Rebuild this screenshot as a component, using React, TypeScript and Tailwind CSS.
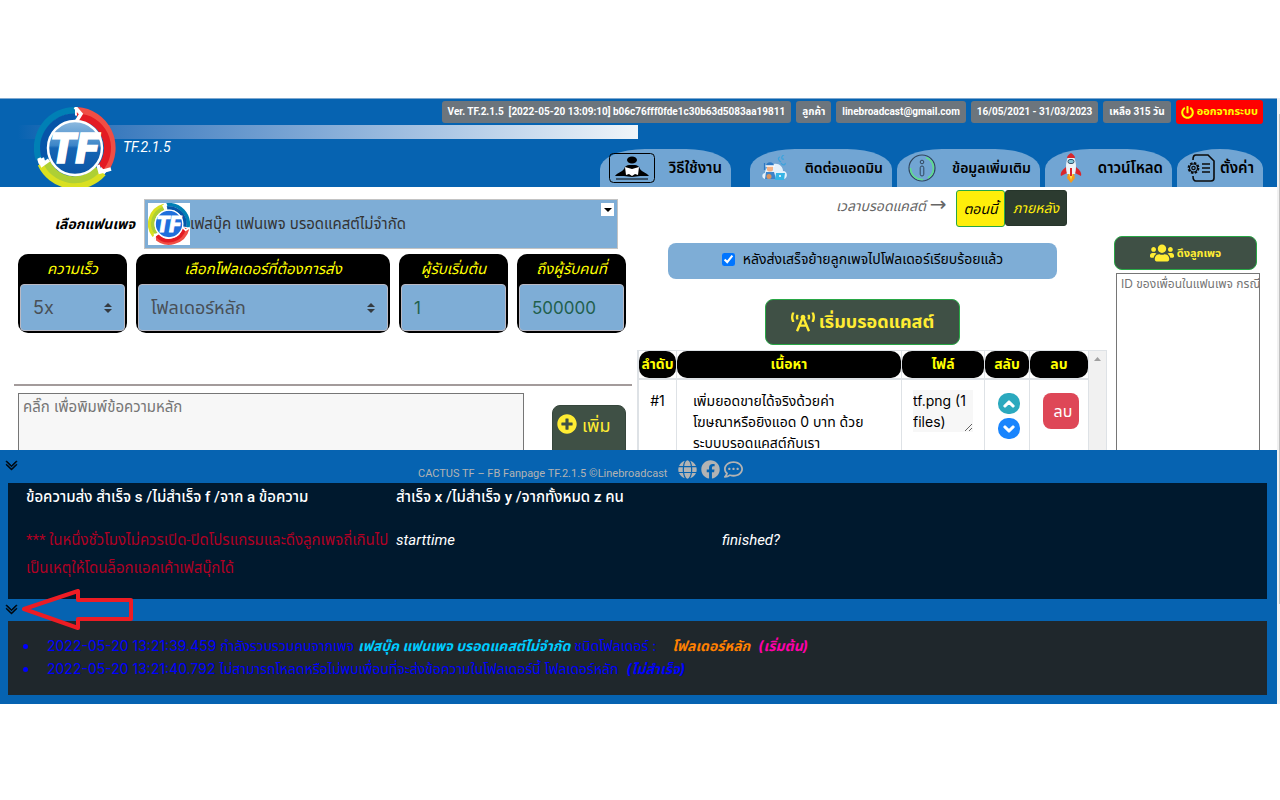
import type { ReactNode } from 'react';
import {
  FaBroadcastTower,
  FaChevronDown,
  FaChevronUp,
  FaFacebook,
  FaGlobe,
  FaPlusCircle,
  FaPowerOff,
  FaRegCommentDots,
  FaUsers,
} from 'react-icons/fa';
import { BsChevronDoubleDown } from 'react-icons/bs';

const accountBadges = [
  'Ver. TF.2.1.5  [2022-05-20 13:09:10] b06c76fff0fde1c30b63d5083aa19811',
  'ลูกค้า',
  'linebroadcast@gmail.com',
  '16/05/2021 - 31/03/2023',
  'เหลือ 315 วัน',
];

function Logo({ className, turned = false }: { className: string; turned?: boolean }) {
  return (
    <svg viewBox="0 0 82 82" className={className} aria-label="TF">
      <defs>
        <linearGradient id="ball" x1="0" y1="0" x2="0" y2="1">
          <stop offset="0" stopColor="#8fbbe0" />
          <stop offset="0.45" stopColor="#3d86c8" />
          <stop offset="0.5" stopColor="#1565b4" />
          <stop offset="1" stopColor="#0b55a5" />
        </linearGradient>
      </defs>
      <g transform={turned ? 'rotate(100 41 41)' : undefined}>
        <circle cx="41" cy="41" r="36" fill="none" stroke="#fff" strokeWidth="7" />
        <path d="M43 3.6A37.500 37.500 0 0 1 71 63" fill="none" stroke="#f04e45" strokeWidth="7" />
        <path d="M43 10A31 31 0 0 1 67 60" fill="none" stroke="#e31b23" strokeWidth="7" />
        <path d="M69 66A37.500 37.500 0 0 1 7 57" fill="none" stroke="#d9e021" strokeWidth="7" />
        <path d="M64 62A31 31 0 0 1 12 54" fill="none" stroke="#aecf35" strokeWidth="7" />
        <path d="M5 52A37.500 37.500 0 0 1 41 3.500" fill="none" stroke="#0080b5" strokeWidth="7" />
        <path d="M11 50A31 31 0 0 1 41 10" fill="none" stroke="#0655a8" strokeWidth="7" />
        <path d="M41 0l6 7-5 8M5 51l3 7 7-5M64 58l2 7 11-3" fill="none" stroke="#fff" strokeWidth="3.500" />
      </g>
      <circle cx="41" cy="41" r="27" fill={turned ? '#1f6fdc' : 'url(#ball)'} stroke="#fff" strokeWidth="2.500" />
      <text
        x="40"
        y="56"
        textAnchor="middle"
        fontSize="42"
        fontWeight="900"
        fontStyle="italic"
        fontFamily="Roboto, sans-serif"
        fill="#fff"
        stroke="#fff"
        strokeWidth="1.500"
      >
        TF
      </text>
    </svg>
  );
}

function ReaderIcon() {
  return (
    <svg viewBox="0 0 46 30" className="h-[30px] w-[46px]">
      <rect x="0.500" y="0.500" width="45" height="29" rx="4" fill="none" stroke="#000" />
      <ellipse cx="23" cy="7" rx="5" ry="3.500" />
      <path d="M6 23c2-3 7-4 9-7 1-3 3-4 5-4h6c2 0 4 1 5 4 2 3 7 4 9 7h-9l-8 1-8-1z" />
      <path d="M16 14l7 2 7-2-1 8-3-1-3 2-3-2-3 1z" fill="#fff" />
      <path d="M7 26h32" stroke="#000" />
    </svg>
  );
}

function HelperIcon() {
  return (
    <svg viewBox="0 0 26 26" className="h-[26px] w-[26px]">
      <path d="M3 24c-4-1-3-6 0-6 0-4 4-9 9-9 5-1 9 3 9 7 5 0 5 7 1 8z" fill="#e4f1fb" />
      <path d="M4 11c0-5 8-5 8 0z" fill="#2b78c4" />
      <path d="M5 11h6v4c-1 2-5 2-6 0z" fill="#f2b184" />
      <path d="M3.500 11h9" stroke="#fff" strokeWidth="1.500" />
      <path d="M2.500 8v7" stroke="#2b78c4" strokeWidth="1.200" />
      <path d="M4 17h8l2 7H3z" fill="#3c83c9" />
      <circle cx="7" cy="21.500" r="2.500" fill="#d9935f" />
      <path d="M14 18h9l-1 7h-9z" fill="#36b4e5" />
      <circle cx="18" cy="21" r="1" fill="#fff" />
      <path d="M18 2c-3 1-1 4 1 5M22 0c-3 1-3 5 0 4M19 8c2 3 5 2 4 0" fill="none" stroke="#3ba3dc" strokeWidth="1.200" />
    </svg>
  );
}

function InfoIcon() {
  return (
    <svg viewBox="0 0 28 28" className="h-7 w-7" fill="none">
      <circle cx="14" cy="14" r="13" stroke="#31465e" strokeWidth="1.200" />
      <path d="M18 3.500A11.500 11.500 0 0 1 20 24M15 25.500A11.500 11.500 0 0 1 2.500 14" stroke="#5fe08a" strokeWidth="1.500" />
      <circle cx="14" cy="8" r="1.800" stroke="#31465e" />
      <rect x="12.200" y="12" width="3.600" height="10" rx="1.800" stroke="#31465e" />
    </svg>
  );
}

function RocketIcon() {
  return (
    <svg viewBox="0 0 22 30" className="h-[30px] w-[22px]">
      <path d="M6 14c-4 3-6 6-5 9l6-3zM16 14c4 3 6 6 5 9l-6-3z" fill="#d9262b" />
      <path d="M8 21h6l1 4-4 5-4-5z" fill="#f39a1e" />
      <path d="M9 21h4l-2 6z" fill="#ffe14a" />
      <path d="M11 1c5 4 6 11 4 20H7C5 12 6 5 11 1z" fill="#eef3f7" />
      <path d="M11 0c2 1 4 3 4 5H7c0-2 2-4 4-5z" fill="#d9262b" />
      <rect x="8" y="6.500" width="6" height="4" rx="2" fill="#7fc4da" stroke="#33546b" />
      <path d="M11 15v8" stroke="#d9262b" strokeWidth="2" />
    </svg>
  );
}

function SettingsIcon() {
  return (
    <svg viewBox="0 0 28 28" className="h-7 w-7" fill="none" stroke="#0b0b0b" strokeWidth="1.600">
      <path d="M6 6c0-4 1-5 3-5h12l6 6v17c0 2-1 3-3 3H9c-2 0-3-1-3-5" />
      <circle cx="6.500" cy="14" r="5" strokeWidth="1.800" strokeDasharray="2.400 1.500" />
      <circle cx="6.500" cy="14" r="4" strokeWidth="1.200" />
      <circle cx="6.500" cy="14" r="1.700" strokeWidth="1.200" />
      <path d="M15 10h8M15 14h8M15 18h8" />
    </svg>
  );
}

function SortArrows() {
  return (
    <svg viewBox="0 0 4 5" className="pointer-events-none mr-3 h-[10px] w-2 shrink-0">
      <path d="M2 0L0 2h4zm0 5L0 3h4z" fill="#343a40" />
    </svg>
  );
}

function NavTab({ icon, label, className }: { icon: ReactNode; label: string; className: string }) {
  return (
    <a
      href="#"
      className={`flex h-[38px] items-center justify-between rounded-[45px_45px_0_0/20px_20px_0_0] bg-[#71a5d3] pr-[9px] leading-6 font-semibold whitespace-nowrap text-black ${className}`}
    >
      {icon}
      <span>{label}</span>
    </a>
  );
}

function FieldCard({ id, label, className, children }: { id: string; label: string; className: string; children: ReactNode }) {
  return (
    <div className={`flex h-[79px] flex-col rounded-[10px] bg-black px-[2px] pb-[2px] ${className}`}>
      <label htmlFor={id} className="h-[30px] text-center text-[15px] leading-[30px] whitespace-nowrap text-[#ffff00] italic">
        {label}
      </label>
      <div className="flex min-h-0 flex-1 items-center rounded-[4px] border border-[#b9b9c4] bg-[#7eadd6]">{children}</div>
    </div>
  );
}

function Header() {
  return (
    <header className="relative h-[89px] overflow-hidden border-t border-[#7fa9d0] bg-[#0663b1]">
      <div className="flex h-[26px] items-center justify-end gap-[5px] pr-[14px] font-['Roboto','Noto_Sans_Thai',sans-serif] text-[10px] font-bold text-white">
        {accountBadges.map((text) => (
          <span key={text} className="rounded-[3px] bg-[#6c757d] px-[6px] leading-[22px] whitespace-pre">
            {text}
          </span>
        ))}
        <button type="button" className="flex h-6 items-center gap-[3px] rounded-[3px] bg-[#ff0000] px-[5px] text-[11px] whitespace-nowrap text-[#ffff00]">
          <FaPowerOff className="size-[13px]" />
          ออกจากระบบ
        </button>
      </div>
      <div className="ml-[18px] h-[14px] w-[620px] bg-linear-to-r from-[#0663b1] to-[#f0f5f9]" />
      <Logo className="absolute top-2 left-[34px] size-[82px]" />
      <div className="flex justify-between pr-[14px] pl-[123px]">
        <span className="font-['Roboto',sans-serif] text-sm leading-4 text-white italic">TF.2.1.5</span>
        <nav className="flex gap-[5px] pt-[10px]">
          <NavTab icon={<ReaderIcon />} label="วิธีใช้งาน" className="mr-[14px] w-[131px] pl-[9px] text-[15px]" />
          <NavTab icon={<HelperIcon />} label="ติดต่อแอดมิน" className="w-[142px] pl-3 text-sm" />
          <NavTab icon={<InfoIcon />} label="ข้อมูลเพิ่มเติม" className="w-[143px] pl-[11px] text-sm" />
          <NavTab icon={<RocketIcon />} label="ดาวน์โหลด" className="w-[127px] pl-[15px] text-[15px]" />
          <NavTab icon={<SettingsIcon />} label="ตั้งค่า" className="w-[86px] pl-[10px] text-[15px]" />
        </nav>
      </div>
    </header>
  );
}

function ComposeColumn() {
  return (
    <section className="w-[632px] shrink-0 pt-3">
      <div className="flex items-center">
        <label htmlFor="fanpage" className="w-[144px] pr-[9px] text-right text-sm font-bold whitespace-nowrap italic">
          เลือกแฟนเพจ
        </label>
        <div className="flex h-[50px] w-[474px] border border-[#c3c3c3] bg-[#7eadd6] p-[3px]">
          <Logo className="size-[42px] bg-white" turned />
          <select id="fanpage" className="min-w-0 flex-1 appearance-none bg-transparent text-[15px] text-[#333]">
            <option>เฟสบุ๊ค แฟนเพจ บรอดแคสต์ไม่จำกัด</option>
          </select>
          <span className="pointer-events-none flex size-[13px] items-center justify-center bg-white">
            <svg viewBox="0 0 8 4" className="h-1 w-2">
              <path d="M0 0h8L4 4z" />
            </svg>
          </span>
        </div>
      </div>

      <div className="mt-[5px] flex gap-[9px] pr-[6px] pl-[18px]">
        <FieldCard id="speed" label="ความเร็ว" className="w-[109px]">
          <select id="speed" className="h-full min-w-0 flex-1 appearance-none bg-transparent pl-3 text-lg text-[#495057]">
            <option>5x</option>
          </select>
          <SortArrows />
        </FieldCard>
        <FieldCard id="folder" label="เลือกโฟลเดอร์ที่ต้องการส่ง" className="w-[254px]">
          <select id="folder" className="h-full min-w-0 flex-1 appearance-none bg-transparent pl-3 text-lg text-[#495057]">
            <option>โฟลเดอร์หลัก</option>
          </select>
          <SortArrows />
        </FieldCard>
        <FieldCard id="first" label="ผู้รับเริ่มต้น" className="w-[109px]">
          <input id="first" defaultValue="1" className="h-full min-w-0 flex-1 bg-transparent pl-3 text-[17px] text-[#22604d]" />
        </FieldCard>
        <FieldCard id="last" label="ถึงผู้รับคนที่" className="w-[109px]">
          <input id="last" defaultValue="500000" className="h-full min-w-0 flex-1 bg-transparent pl-3 text-[17px] text-[#22604d]" />
        </FieldCard>
      </div>

      <hr className="mt-[51px] ml-[14px] border-t-2 border-[#a39b9b]" />
      <div className="mt-[7px] flex items-start justify-between pr-[6px] pl-[18px]">
        <textarea
          aria-label="ข้อความหลัก"
          placeholder="คลิ๊ก เพื่อพิมพ์ข้อความหลัก"
          className="h-24 w-[506px] resize-none border border-[#767676] bg-[#f7f7f7] px-1 py-[3px] text-[15px] leading-5 placeholder:text-[#757575]"
        />
        <button type="button" className="mt-3 flex h-20 w-[74px] items-start gap-[5px] rounded-lg border border-[#36463c] bg-[#3f5045] pt-2 pl-1 text-lg leading-6 whitespace-nowrap text-[#ffec33]">
          <FaPlusCircle className="size-5" />
          เพิ่ม
        </button>
      </div>
    </section>
  );
}

function HeadCell({ children, className }: { children: ReactNode; className: string }) {
  return (
    <th className={`border-x border-[#dee2e6] p-0 ${className}`}>
      <div className="h-[27px] rounded-[10px] bg-black text-sm leading-[26px] font-bold whitespace-nowrap text-[#ffff00]">{children}</div>
    </th>
  );
}

function BroadcastColumn() {
  return (
    <section className="w-[470px] shrink-0 pt-[3px]">
      <div className="flex items-start pl-[199px] text-sm italic">
        <span className="flex w-[120px] gap-1 leading-8 whitespace-nowrap text-[#666]">
          เวลาบรอดแคสต์
          <span className="font-['DejaVu_Sans',sans-serif] text-xl leading-7 not-italic">→</span>
        </span>
        <button type="button" className="h-[37px] w-[49px] rounded-[3px] border border-[#28a745] bg-[#ffee0a] leading-8 whitespace-nowrap italic">
          ตอนนี้
        </button>
        <button type="button" className="h-9 w-[62px] rounded-[3px] border border-[#26352b] bg-[#2c3b30] leading-8 whitespace-nowrap text-[#ffee0a] italic">
          ภายหลัง
        </button>
      </div>
      <label className="mt-4 mr-[50px] ml-[31px] flex h-9 items-center justify-center gap-2 rounded-lg bg-[#7eadd6] pb-1 text-sm whitespace-nowrap">
        <input type="checkbox" defaultChecked className="size-[13px] accent-[#0075ff]" />
        หลังส่งเสร็จย้ายลูกเพจไปโฟลเดอร์เรียบร้อยแล้ว
      </label>
      <button
        type="button"
        className="mt-5 ml-[128px] flex h-[46px] w-[195px] items-center justify-center gap-1 rounded-lg border border-[#28a745] bg-[#3f5045] text-lg font-bold whitespace-nowrap text-[#ffec33]"
      >
        <FaBroadcastTower className="size-6" />
        เริ่มบรอดแคสต์
      </button>
      <div className="mt-[5px] flex border border-[#dee2e6]">
        <table className="min-w-0 flex-1 table-fixed border-collapse text-sm">
          <thead>
            <tr className="border-b-2 border-[#dee2e6]">
              <HeadCell className="w-[38px]">ลำดับ</HeadCell>
              <HeadCell className="w-[225px]">เนื้อหา</HeadCell>
              <HeadCell className="w-[83px]">ไฟล์</HeadCell>
              <HeadCell className="w-[45px]">สลับ</HeadCell>
              <HeadCell className="w-[59px]">ลบ</HeadCell>
            </tr>
          </thead>
          <tbody>
            <tr className="align-top">
              <td className="border-x border-[#dee2e6] pt-[10px] text-center leading-[21px]">#1</td>
              <td className="border-x border-[#dee2e6] px-4 pt-[10px] leading-[21px] whitespace-nowrap">
                เพิ่มยอดขายได้จริงด้วยค่า
                <br />
                โฆษณาหรือยิงแอด 0 บาท ด้วย
                <br />
                ระบบบรอดแคสต์กับเรา
              </td>
              <td className="border-x border-[#dee2e6] px-[11px] pt-[10px]">
                <textarea
                  aria-label="ไฟล์"
                  defaultValue="tf.png (1 files)"
                  className="block h-[42px] w-full resize overflow-hidden bg-[#f7f7f7] leading-[21px]"
                />
              </td>
              <td className="border-x border-[#dee2e6] pt-[13px] pl-1">
                <button type="button" aria-label="เลื่อนขึ้น" className="mx-auto flex h-[21px] w-[22px] items-center justify-center rounded-[10px] bg-[#2ba9be] text-white">
                  <FaChevronUp className="size-3 stroke-current stroke-[50]" />
                </button>
                <button type="button" aria-label="เลื่อนลง" className="mx-auto mt-1 flex h-[21px] w-[22px] items-center justify-center rounded-[10px] bg-[#1a85fd] text-white">
                  <FaChevronDown className="size-3 stroke-current stroke-[50]" />
                </button>
              </td>
              <td className="border-x border-[#dee2e6] pt-[13px] pl-1">
                <button type="button" className="mx-auto block h-9 w-9 rounded-lg bg-[#de4757] pl-1 text-base text-white">
                  ลบ
                </button>
              </td>
            </tr>
          </tbody>
        </table>
        <div className="flex w-[17px] justify-center bg-[#f1f1f1] pt-[6px]">
          <svg viewBox="0 0 7 4" className="h-1 w-[7px]">
            <path d="M0 4h7L3.500 0z" fill="#a0a0a0" />
          </svg>
        </div>
      </div>
    </section>
  );
}

function FriendsColumn() {
  return (
    <section className="min-w-0 flex-1 pt-[49px] pl-[2px]">
      <button
        type="button"
        className="flex h-[34px] w-[143px] items-center justify-center gap-[3px] rounded-lg border border-[#28a745] bg-[#3f5045] text-[11px] font-bold whitespace-nowrap text-[#ffec33]"
      >
        <FaUsers className="size-6" />
        ดึงลูกเพจ
      </button>
      <textarea
        aria-label="ID ของเพื่อนในแฟนเพจ"
        placeholder="ID ของเพื่อนในแฟนเพจ กรณี"
        className="mt-[3px] ml-[2px] h-52 w-[144px] resize-none overflow-hidden border border-[#767676] pl-1 text-xs leading-5 whitespace-pre placeholder:text-[#757575]"
      />
    </section>
  );
}

function StatusPanel() {
  return (
    <footer className="bg-[#0663b1] pr-[10px] pb-[9px] pl-2">
      <div className="flex h-[33px] items-start">
        <button type="button" aria-label="ย่อ" className="-ml-[3px] pt-[9px]">
          <BsChevronDoubleDown className="size-[13px] stroke-black stroke-1" />
        </button>
        <div className="flex gap-1 pt-[10px] pl-[400px] text-[#b3b3b3]">
          <span className="w-[256px] pt-1 font-['Roboto',sans-serif] text-[11px] leading-5 whitespace-nowrap">
            CACTUS TF – FB Fanpage TF.2.1.5 ©Linebroadcast
          </span>
          <a href="#" aria-label="Website">
            <FaGlobe className="size-[19px]" />
          </a>
          <a href="#" aria-label="Facebook">
            <FaFacebook className="size-[19px]" />
          </a>
          <a href="#" aria-label="Chat">
            <FaRegCommentDots className="size-[19px]" />
          </a>
        </div>
      </div>
      <div className="grid h-[116px] grid-cols-[370px_326px_1fr] grid-rows-[43px_1fr] bg-[#00192e] pl-[18px] font-['Roboto','Noto_Sans_Thai',sans-serif] text-[15px] leading-7 text-white">
        <p className="font-medium whitespace-nowrap">ข้อความส่ง สำเร็จ s /ไม่สำเร็จ f /จาก a ข้อความ</p>
        <p className="col-span-2 font-medium whitespace-nowrap">สำเร็จ x /ไม่สำเร็จ y /จากทั้งหมด z คน</p>
        <p className="whitespace-nowrap text-[#b00023]">
          *** ในหนึ่งชั่วโมงไม่ควรเปิด-ปิดโปรแกรมและดึงลูกเพจถี่เกินไป
          <br />
          เป็นเหตุให้โดนล็อกแอคเค้าเฟสบุ๊กได้
        </p>
        <p className="italic">starttime</p>
        <p className="italic">finished?</p>
      </div>
      <div className="relative h-[22px]">
        <button type="button" aria-label="ย่อ" className="-ml-[3px] block pt-1">
          <BsChevronDoubleDown className="size-[13px] stroke-black stroke-1" />
        </button>
        <svg viewBox="0 0 112 42" className="absolute -top-[10px] left-[14px] h-[42px] w-[112px]" fill="none">
          <path d="M2 20L56 2v9h53v19H56v9z" stroke="#ed1c24" strokeWidth="4" strokeLinejoin="round" />
        </svg>
      </div>
      <ul className="h-[74px] list-disc bg-[#1f272c] pt-[13px] pl-[31px] text-sm leading-[23px] whitespace-nowrap text-[#0000ff]">
        <li className="pl-2">
          2022-05-20 13:21:39.459 กำลังรวบรวมคนจากเพจ <b className="text-[#00ccff] italic">เฟสบุ๊ค แฟนเพจ บรอดแคสต์ไม่จำกัด</b> ชนิดโฟลเดอร์ :
          <b className="ml-4 text-[#ff8000] italic">โฟลเดอร์หลัก</b>
          <b className="ml-2 text-[#ff00aa] italic">(เริ่มต้น)</b>
        </li>
        <li className="pl-2">
          2022-05-20 13:21:40.792 ไม่สามารถโหลดหรือไม่พบเพื่อนที่จะส่งข้อความในโฟลเดอร์นี้ โฟลเดอร์หลัก
          <b className="ml-2 italic">(ไม่สำเร็จ)</b>
        </li>
      </ul>
    </footer>
  );
}

export default function App() {
  return (
    <div className="bg-white pt-[98px] font-['Inter','Noto_Sans_Thai','Noto_Sans',sans-serif] text-black">
      <div className="flex">
        <div className="min-w-0 flex-1">
          <Header />
          <main className="flex h-[263px] gap-[5px] overflow-hidden">
            <ComposeColumn />
            <BroadcastColumn />
            <FriendsColumn />
          </main>
          <StatusPanel />
        </div>
        <div className="w-[3px] bg-[#f1f1f1] pt-4 pl-[2px]">
          <div className="h-[490px] bg-[#c1c1c1]" />
        </div>
      </div>
    </div>
  );
}
